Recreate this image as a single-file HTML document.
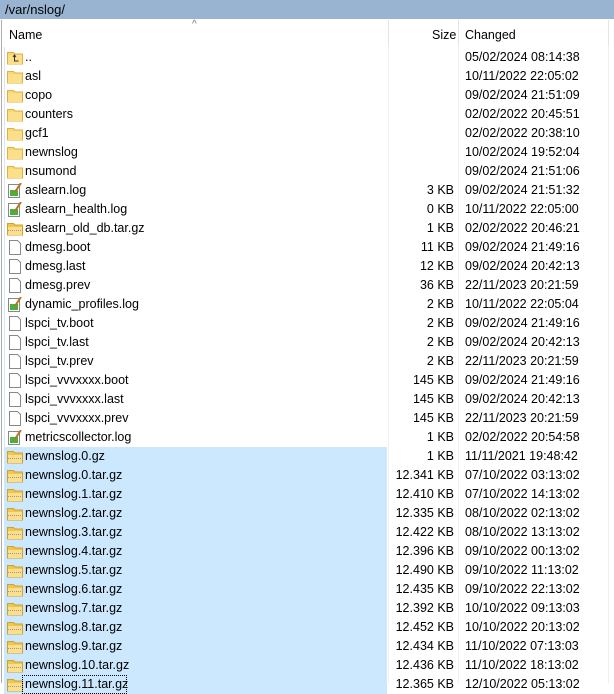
<!DOCTYPE html><html><head><style>
body{margin:0;width:614px;height:683px;overflow:hidden;background:#fff;font-family:"Liberation Sans",sans-serif;font-size:12.5px;color:#000;position:relative}
.t{position:absolute;left:0;top:0;width:614px;height:19px;background:#99b4d1;}
.t span{position:absolute;left:5px;top:2px;font-size:13px}
.b{position:absolute;left:1px;top:20px;width:1px;height:663px;background:#adadad}
.hd{position:absolute;top:28px;font-size:12.5px}
.vl{position:absolute;top:20px;width:1px;height:26px;background:#e5e5e5}
.cl{position:absolute;top:46px;width:1px;height:637px;background:#f0f0f0}
.r{position:absolute;left:4px;width:610px;height:19px}
.r .n{position:absolute;left:21px;top:2px}
.r .s{position:absolute;right:160px;top:2px;text-align:right}
.r .c{position:absolute;left:461px;top:2px}
.sel .hl{position:absolute;left:0;top:0;width:383px;height:19px;background:#cce8ff}
.i{position:absolute;left:3px;top:2px;width:16px;height:15px}
</style></head><body>
<div class="t"><span>/var/nslog/</span></div>
<div class="b"></div>
<div style="position:absolute;left:4px;top:47px;width:1px;height:636px;background:#d6e6f5"></div>
<span class="hd" style="left:9px">Name</span>
<span style="position:absolute;left:192px;top:19px;font-size:10px;color:#777">^</span>
<span class="hd" style="left:432px">Size</span>
<span class="hd" style="left:465px">Changed</span>
<div class="vl" style="left:388px"></div><div class="vl" style="left:458px"></div><div class="vl" style="left:608px"></div>
<div class="cl" style="left:388px"></div><div class="cl" style="left:458px"></div><div class="cl" style="left:608px"></div>
<div id="rows"></div>
<script>
var F='<svg class="i" viewBox="0 0 16 15"><path d="M0.5 2.5h6l1.5 1.5h7.5v10h-15z" fill="#f8d775" stroke="#e0b040"/><rect x="1" y="5" width="14" height="9" fill="#fbdf8a"/></svg>';
var U='<svg class="i" viewBox="0 0 16 15"><path d="M0.5 2.5h6l1.5 1.5h7.5v10h-15z" fill="#f8d775" stroke="#e0b040"/><rect x="1" y="5" width="14" height="9" fill="#fbdf8a"/><path d="M6 7l1.5-2 1.5 2M7.5 5v6h4" stroke="#333" fill="none"/></svg>';
var Z='<svg class="i" viewBox="0 0 16 15"><path d="M0.5 2.5h6l1.5 1.5h7.5v10h-15z" fill="#f0c550" stroke="#d0a030"/><rect x="1" y="6" width="14" height="8" fill="#fbdf8a"/><path d="M1 9.5h14" stroke="#999" stroke-dasharray="1 1"/></svg>';
var D='<svg class="i" viewBox="0 0 16 15"><path d="M2.5 0.5h8l3 3v11h-11z" fill="#fff" stroke="#888"/></svg>';
var L='<svg class="i" viewBox="0 0 16 15"><path d="M1.5 1.5h11v13h-11z" fill="#fff" stroke="#888"/><rect x="3" y="7" width="8" height="6" fill="#4caf3a"/><path d="M14 0l-6 9" stroke="#c07020" stroke-width="2"/></svg>';
var R=[[U,'..','','05/02/2024 08:14:38'],[F,'asl','','10/11/2022 22:05:02'],[F,'copo','','09/02/2024 21:51:09'],[F,'counters','','02/02/2022 20:45:51'],[F,'gcf1','','02/02/2022 20:38:10'],[F,'newnslog','','10/02/2024 19:52:04'],[F,'nsumond','','09/02/2024 21:51:06'],
[L,'aslearn.log','3 KB','09/02/2024 21:51:32'],[L,'aslearn_health.log','0 KB','10/11/2022 22:05:00'],[Z,'aslearn_old_db.tar.gz','1 KB','02/02/2022 20:46:21'],[D,'dmesg.boot','11 KB','09/02/2024 21:49:16'],[D,'dmesg.last','12 KB','09/02/2024 20:42:13'],[D,'dmesg.prev','36 KB','22/11/2023 20:21:59'],[L,'dynamic_profiles.log','2 KB','10/11/2022 22:05:04'],[D,'lspci_tv.boot','2 KB','09/02/2024 21:49:16'],[D,'lspci_tv.last','2 KB','09/02/2024 20:42:13'],[D,'lspci_tv.prev','2 KB','22/11/2023 20:21:59'],[D,'lspci_vvvxxxx.boot','145 KB','09/02/2024 21:49:16'],[D,'lspci_vvvxxxx.last','145 KB','09/02/2024 20:42:13'],[D,'lspci_vvvxxxx.prev','145 KB','22/11/2023 20:21:59'],[L,'metricscollector.log','1 KB','02/02/2022 20:54:58'],
[Z,'newnslog.0.gz','1 KB','11/11/2021 19:48:42',1],[Z,'newnslog.0.tar.gz','12.341 KB','07/10/2022 03:13:02',1],[Z,'newnslog.1.tar.gz','12.410 KB','07/10/2022 14:13:02',1],[Z,'newnslog.2.tar.gz','12.335 KB','08/10/2022 02:13:02',1],[Z,'newnslog.3.tar.gz','12.422 KB','08/10/2022 13:13:02',1],[Z,'newnslog.4.tar.gz','12.396 KB','09/10/2022 00:13:02',1],[Z,'newnslog.5.tar.gz','12.490 KB','09/10/2022 11:13:02',1],[Z,'newnslog.6.tar.gz','12.435 KB','09/10/2022 22:13:02',1],[Z,'newnslog.7.tar.gz','12.392 KB','10/10/2022 09:13:03',1],[Z,'newnslog.8.tar.gz','12.452 KB','10/10/2022 20:13:02',1],[Z,'newnslog.9.tar.gz','12.434 KB','11/10/2022 07:13:03',1],[Z,'newnslog.10.tar.gz','12.436 KB','11/10/2022 18:13:02',1],[Z,'newnslog.11.tar.gz','12.365 KB','12/10/2022 05:13:02',1]];
var h='';R.forEach(function(r,i){h+='<div class="r'+(r[4]?' sel':'')+'" style="top:'+(48+19*i)+'px">'+(r[4]?'<div class="hl"></div>':'')+r[0]+'<span class="n">'+r[1]+'</span><span class="s">'+r[2]+'</span><span class="c">'+r[3]+'</span></div>';});
h+='<div style="position:absolute;left:22px;top:'+(48+19*33)+'px;width:103px;height:17px;border:1px dotted #000"></div>';
document.getElementById('rows').innerHTML=h;
</script>
</body></html>
